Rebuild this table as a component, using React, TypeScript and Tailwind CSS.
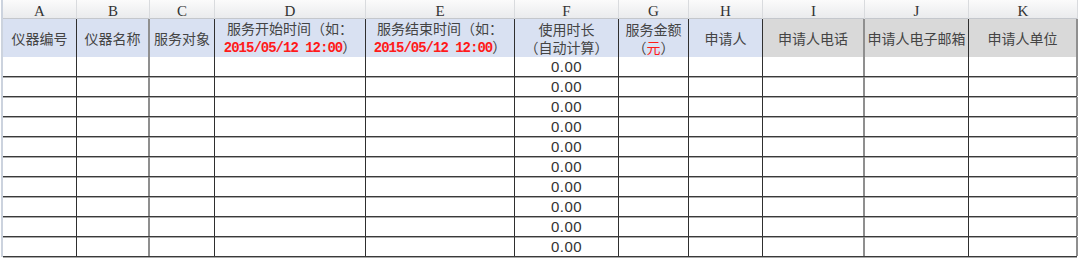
const columns = [
  { letter: "A", bg: "blue", edge: "dark" },
  { letter: "B", bg: "blue", edge: "gray" },
  { letter: "C", bg: "blue", edge: "dark" },
  { letter: "D", bg: "blue", edge: "dark" },
  { letter: "E", bg: "blue", edge: "dark" },
  { letter: "F", bg: "blue", edge: "dark" },
  { letter: "G", bg: "blue", edge: "dark" },
  { letter: "H", bg: "blue", edge: "dark" },
  { letter: "I", bg: "gray", edge: "gray" },
  { letter: "J", bg: "gray", edge: "dark" },
  { letter: "K", bg: "gray", edge: "gray" },
];

const gridCols =
  "grid grid-cols-[74px_73px_65px_151px_149px_104px_70px_74px_102px_104px_109px]";

const cjk = "font-['Noto_Sans_CJK_SC',sans-serif]";

function edgeClass(edge: string) {
  return edge === "gray"
    ? "border-r-2 border-r-[#8f8f8f]"
    : "border-r border-r-[#2f2f2f]";
}

function HeaderLabel({ index }: { index: number }) {
  const red =
    "font-['Liberation_Mono',monospace] text-[#ff1a1a] font-bold text-[14px] tracking-[-1px]";
  switch (index) {
    case 0:
      return <span>仪器编号</span>;
    case 1:
      return <span>仪器名称</span>;
    case 2:
      return <span>服务对象</span>;
    case 3:
    case 4:
      return (
        <>
          <span className="whitespace-nowrap">
            {index === 3 ? "服务开始时间（如：" : "服务结束时间（如："}
          </span>
          <span className="whitespace-nowrap">
            <span className={red}>2015/05/12 12:00</span>）
          </span>
        </>
      );
    case 5:
      return (
        <>
          <span>使用时长</span>
          <span>（自动计算）</span>
        </>
      );
    case 6:
      return (
        <>
          <span>服务金额</span>
          <span>
            （<span className="text-[#ff1a1a]">元</span>）
          </span>
        </>
      );
    case 7:
      return <span>申请人</span>;
    case 8:
      return <span>申请人电话</span>;
    case 9:
      return <span>申请人电子邮箱</span>;
    default:
      return <span>申请人单位</span>;
  }
}

export default function App() {
  const rows = Array.from({ length: 10 }, (_, i) => i);

  return (
    <div className="w-[1080px] h-[258px] bg-white overflow-hidden">
      <div className="ml-[1px] w-[1076px] border-l-2 border-l-[#ccd3de]">
        {/* column letters */}
        <div
          className={`${gridCols} h-[19px] bg-gradient-to-b from-[#fbfbfb] to-[#eaebed] border-b border-b-[#c4c7cc]`}
        >
          {columns.map((col) => (
            <div
              key={col.letter}
              className="flex items-center justify-center border-r border-r-[#d9dbde] font-['Liberation_Serif',serif] text-[15px] text-[#333]"
            >
              {col.letter}
            </div>
          ))}
        </div>

        {/* header row */}
        <div className={`${gridCols} h-[38px] border-b border-b-[#222]`}>
          {columns.map((col, i) => (
            <div
              key={col.letter}
              className={`flex flex-col items-center justify-center text-center leading-[18px] text-[14px] text-[#444] ${cjk} ${
                col.bg === "blue" ? "bg-[#d9e1f2]" : "bg-[#d9d9d9]"
              } ${edgeClass(col.edge)}`}
            >
              <HeaderLabel index={i} />
            </div>
          ))}
        </div>

        {/* data rows */}
        {rows.map((r) => (
          <div
            key={r}
            className={`${gridCols} h-[20px] border-b border-b-[#3a3a3a] shadow-[0_1px_0_#a9a9a9]`}
          >
            {columns.map((col) => (
              <div
                key={col.letter}
                className={`flex items-end justify-center ${edgeClass(col.edge)}`}
              >
                {col.letter === "F" && (
                  <span className="font-['Liberation_Sans',sans-serif] text-[15px] leading-[18px] tracking-[0.5px] text-[#333]">
                    0.00
                  </span>
                )}
              </div>
            ))}
          </div>
        ))}
      </div>
    </div>
  );
}
